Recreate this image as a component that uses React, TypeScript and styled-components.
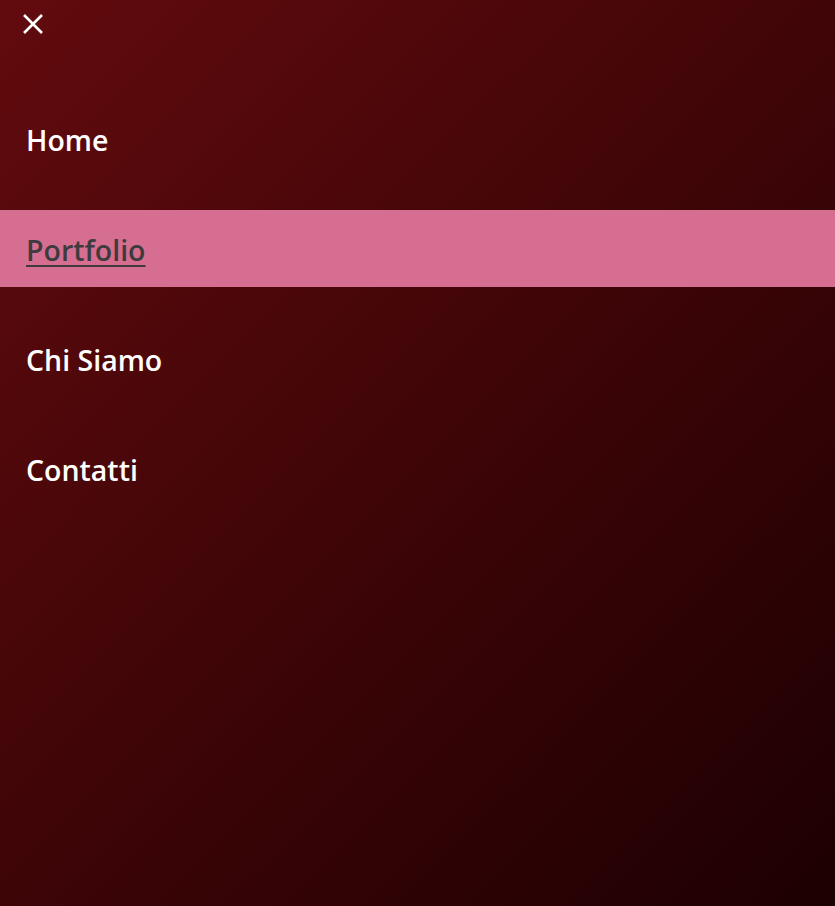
import { FC } from "react";
import styled, { createGlobalStyle } from "styled-components";

const GlobalStyle = createGlobalStyle`
   html, body, #root {
      margin: 0;
      padding: 0;
      height: 100%;
   }
   body {
      font-family: "Open Sans", "Noto Sans", "Liberation Sans", sans-serif;
   }
`;

const Menu = styled.nav`
   height: 906px;
   box-sizing: border-box;
   background: linear-gradient(135deg, #620b0e 0%, #3f0507 50%, #1d0002 100%);
   display: flex;
   flex-direction: column;
`;

const CloseButton = styled.button`
   width: 44px;
   height: 44px;
   margin: 2px 0 0 11px;
   padding: 0;
   border: none;
   background: transparent;
   cursor: pointer;
   display: flex;
   align-items: center;
   justify-content: center;
`;

const List = styled.ul`
   list-style: none;
   margin: 54px 0 0;
   padding: 0;
   display: flex;
   flex-direction: column;
   gap: 33px;
`;

const Item = styled.li<{ $active?: boolean }>`
   height: 77px;
   display: flex;
   align-items: center;
   padding-left: 26px;
   background-color: ${({ $active }) => ($active ? "#d66e92" : "transparent")};
`;

const Link = styled.a<{ $active?: boolean }>`
   font-size: 28.5px;
   font-weight: 600;
   color: ${({ $active }) => ($active ? "#3d3b3d" : "#ffffff")};
   text-decoration: ${({ $active }) => ($active ? "underline" : "none")};
   text-decoration-thickness: 2px;
   text-underline-offset: 4px;
   margin-top: 3px;
`;

const links = ["Home", "Portfolio", "Chi Siamo", "Contatti"];

const App: FC = () => {
   return (
      <>
         <GlobalStyle />
         <Menu>
            <CloseButton aria-label="Chiudi">
               <svg width="22" height="22" viewBox="0 0 22 22">
                  <path d="M2 2 L20 20 M20 2 L2 20" stroke="#ffffff" strokeWidth="2.6" />
               </svg>
            </CloseButton>
            <List>
               {links.map((l) => (
                  <Item key={l} $active={l === "Portfolio"}>
                     <Link href="#" $active={l === "Portfolio"}>
                        {l}
                     </Link>
                  </Item>
               ))}
            </List>
         </Menu>
      </>
   );
};

export default App;
